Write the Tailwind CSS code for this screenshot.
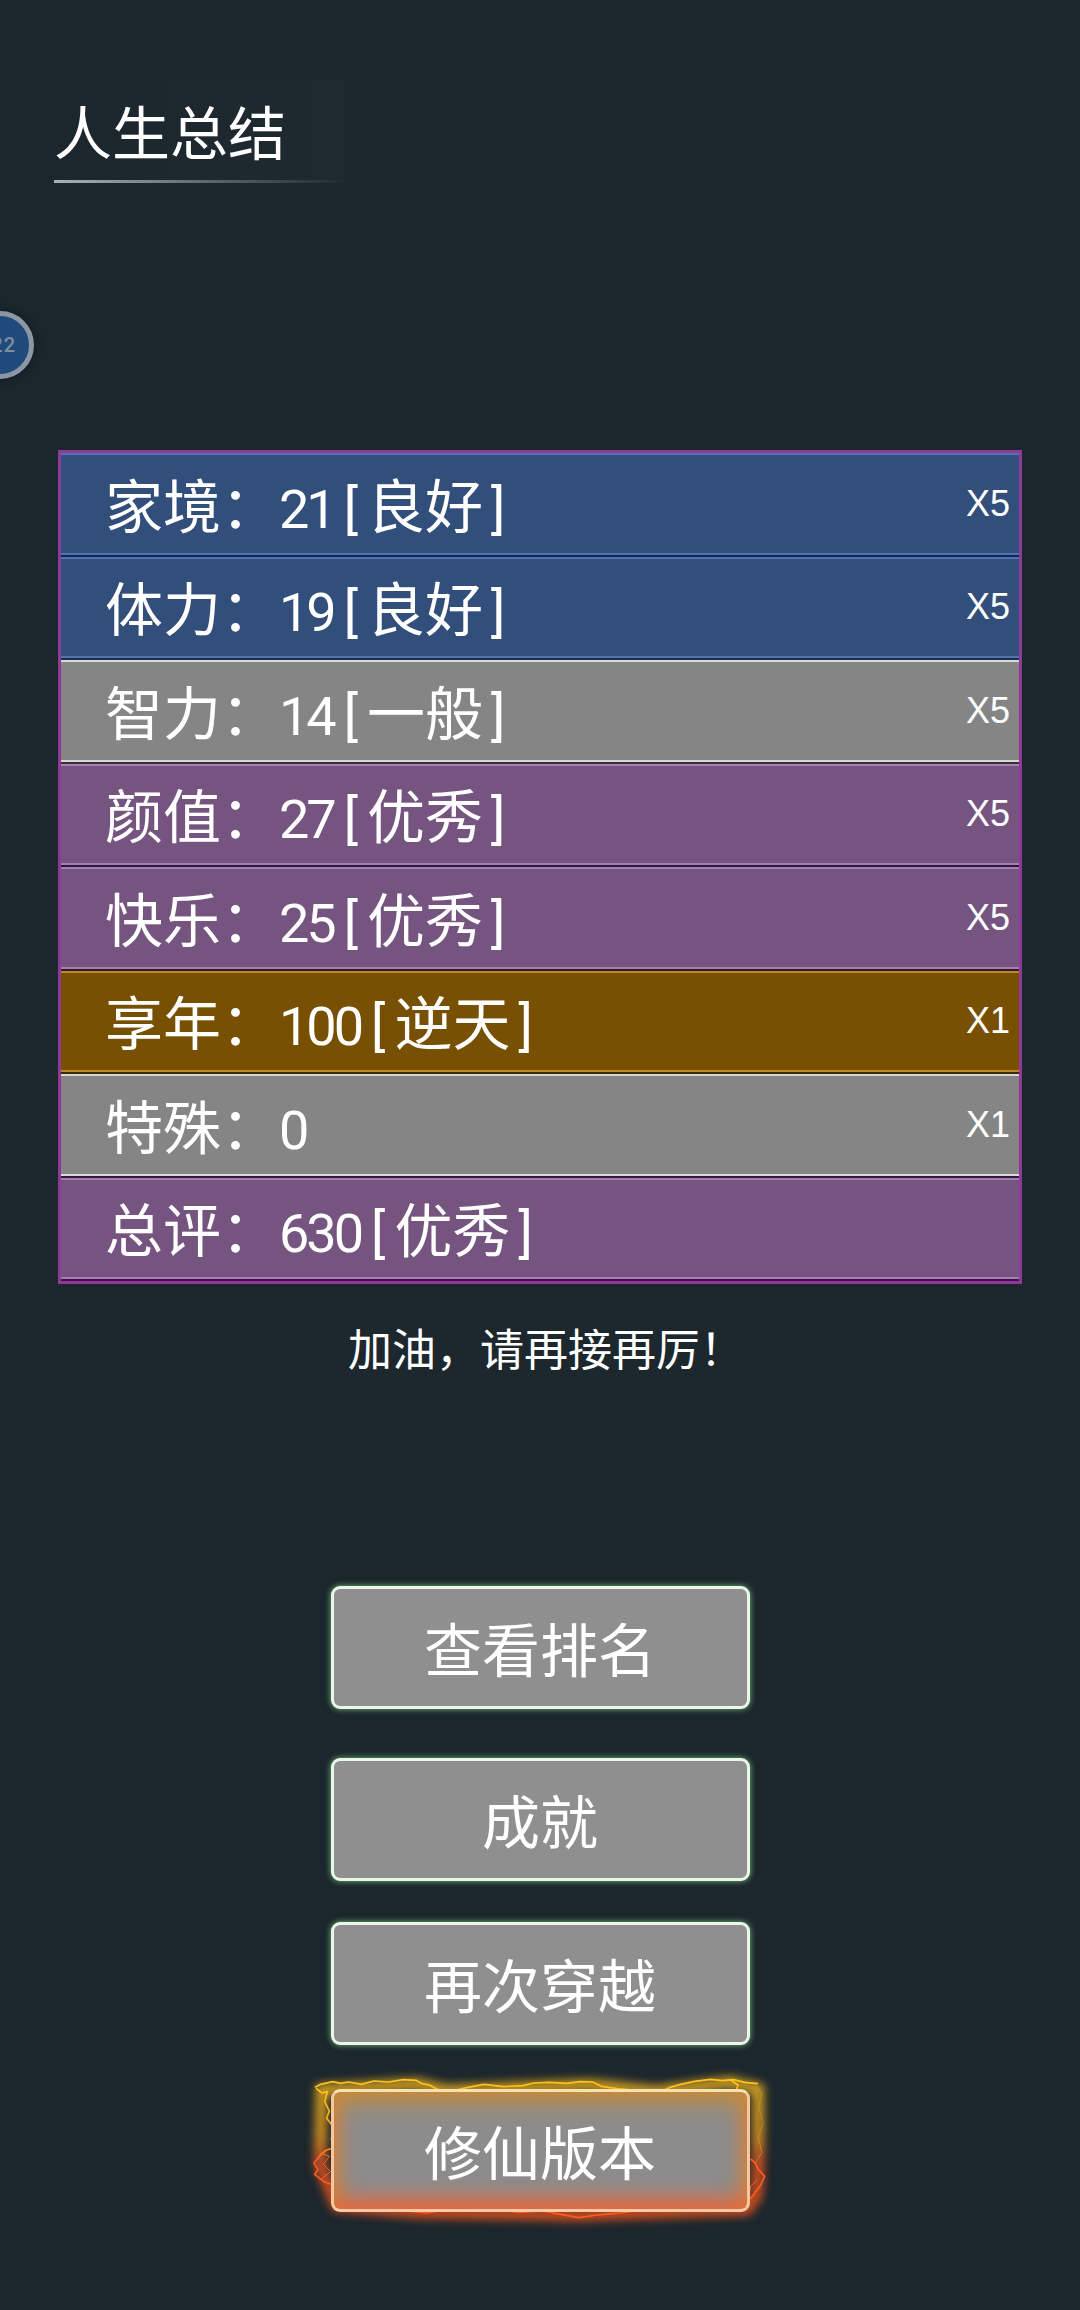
<!DOCTYPE html>
<html lang="zh">
<head>
  <meta charset="utf-8"/>
  <title>人生总结</title>
  <script src="https://cdn.jsdelivr.net/npm/@tailwindcss/browser@4"></script>
</head>
<body class="relative w-[1080px] h-[2310px] overflow-hidden bg-[#1c262d] text-white font-['Roboto','Noto_Sans_CJK_SC',sans-serif]">

  <!-- float ball -->
  <div class="absolute left-[-34px] top-[311px] w-[68px] h-[68px] rounded-full bg-[#1f4a7c] border-[5px] border-[#8b97a3] shadow-[0_0_8px_#11181d] flex items-center justify-end pr-[13px] text-[20px] font-medium leading-none tracking-[1px] text-[#7f8d9c]">22</div>

  <!-- title -->
  <div class="ml-[54px] pt-[80px]">
    <div class="w-[290px] h-[103px] flex items-center bg-gradient-to-r from-[#1c262d] to-[#1e2930] border-b-[3px] border-transparent relative">
      <h1 class="text-[58px] leading-none font-normal mt-[10px]">人生总结</h1>
      <div class="absolute left-0 right-0 bottom-[-3px] h-[3px] bg-gradient-to-r from-[#a8b0b8] to-transparent"></div>
    </div>
  </div>

  <!-- score table -->
  <div class="mt-[267px] ml-[58px] w-[964px] h-[834px] border-[3px] border-[#8f3a96] text-[58px]">
    <div class="h-[103.5px] border-b-2 border-[#0d2a50]">
      <div class="h-full bg-[#324e7b] border-y-2 border-[#5273b4] flex items-center justify-between pl-[44px] pr-[9px]">
        <span class="leading-none mt-[8px]">家境：<span class="text-[54px] tracking-[-3px]">21<span class="ml-[10px] mr-[12px]">[</span></span>良好<span class="text-[54px] ml-[8px]">]</span></span>
        <span class="text-[36px] font-['Liberation_Sans',sans-serif]">X5</span>
      </div>
    </div>
    <div class="h-[103.5px] border-b-2 border-[#1a2f4a]">
      <div class="h-full bg-[#324e7b] border-y-2 border-[#5273b4] flex items-center justify-between pl-[44px] pr-[9px]">
        <span class="leading-none mt-[8px]">体力：<span class="text-[54px] tracking-[-3px]">19<span class="ml-[10px] mr-[12px]">[</span></span>良好<span class="text-[54px] ml-[8px]">]</span></span>
        <span class="text-[36px] font-['Liberation_Sans',sans-serif]">X5</span>
      </div>
    </div>
    <div class="h-[103.5px] border-b-2 border-[#333333]">
      <div class="h-full bg-[#858585] border-y-2 border-[#d8d8d8] flex items-center justify-between pl-[44px] pr-[9px]">
        <span class="leading-none mt-[8px]">智力：<span class="text-[54px] tracking-[-3px]">14<span class="ml-[10px] mr-[12px]">[</span></span>一般<span class="text-[54px] ml-[8px]">]</span></span>
        <span class="text-[36px] font-['Liberation_Sans',sans-serif]">X5</span>
      </div>
    </div>
    <div class="h-[103.5px] border-b-2 border-[#2e1a3a]">
      <div class="h-full bg-[#75557f] border-y-2 border-[#a57fb0] flex items-center justify-between pl-[44px] pr-[9px]">
        <span class="leading-none mt-[8px]">颜值：<span class="text-[54px] tracking-[-3px]">27<span class="ml-[10px] mr-[12px]">[</span></span>优秀<span class="text-[54px] ml-[8px]">]</span></span>
        <span class="text-[36px] font-['Liberation_Sans',sans-serif]">X5</span>
      </div>
    </div>
    <div class="h-[103.5px] border-b-2 border-[#2e1a3a]">
      <div class="h-full bg-[#75557f] border-y-2 border-[#a57fb0] flex items-center justify-between pl-[44px] pr-[9px]">
        <span class="leading-none mt-[8px]">快乐：<span class="text-[54px] tracking-[-3px]">25<span class="ml-[10px] mr-[12px]">[</span></span>优秀<span class="text-[54px] ml-[8px]">]</span></span>
        <span class="text-[36px] font-['Liberation_Sans',sans-serif]">X5</span>
      </div>
    </div>
    <div class="h-[103.5px] border-b-2 border-[#3a2800]">
      <div class="h-full bg-[#775003] border-y-2 border-[#c08a20] flex items-center justify-between pl-[44px] pr-[9px]">
        <span class="leading-none mt-[8px]">享年：<span class="text-[54px] tracking-[-3px]">100<span class="ml-[10px] mr-[12px]">[</span></span>逆天<span class="text-[54px] ml-[8px]">]</span></span>
        <span class="text-[36px] font-['Liberation_Sans',sans-serif]">X1</span>
      </div>
    </div>
    <div class="h-[103.5px] border-b-2 border-[#2e1a3a]">
      <div class="h-full bg-[#858585] border-y-2 border-[#d8d8d8] flex items-center justify-between pl-[44px] pr-[9px]">
        <span class="leading-none mt-[8px]">特殊：<span class="text-[54px] tracking-[-3px]">0</span></span>
        <span class="text-[36px] font-['Liberation_Sans',sans-serif]">X1</span>
      </div>
    </div>
    <div class="h-[103.5px] border-b-2 border-[#45104f]">
      <div class="h-full bg-[#75557f] border-y-2 border-[#a57fb0] flex items-center pl-[44px] pr-[9px]">
        <span class="leading-none mt-[8px]">总评：<span class="text-[54px] tracking-[-3px]">630<span class="ml-[10px] mr-[12px]">[</span></span>优秀<span class="text-[54px] ml-[8px]">]</span></span>
      </div>
    </div>
  </div>

  <!-- message -->
  <div class="mt-[16px] mx-auto w-[870px] h-[84px] flex items-center justify-center bg-[#1d272e] pt-[18px] pl-[12px] text-[44px] leading-none">
    加油，请再接再厉！
  </div>

  <!-- buttons -->
  <div class="mt-[202px] flex flex-col items-center">
    <button class="w-[419px] h-[123px] pt-[8px] rounded-[9px] bg-[#8f8f8f] border-[3px] border-[#eaf6ea] shadow-[0_0_6px_#6fbf6f] text-[58px] leading-none">查看排名</button>
    <button class="mt-[49px] w-[419px] h-[123px] pt-[8px] rounded-[9px] bg-[#8f8f8f] border-[3px] border-[#eaf6ea] shadow-[0_0_6px_#6fbf6f] text-[58px] leading-none">成就</button>
    <button class="mt-[41px] w-[419px] h-[123px] pt-[8px] rounded-[9px] bg-[#8f8f8f] border-[3px] border-[#eaf6ea] shadow-[0_0_6px_#6fbf6f] text-[58px] leading-none">再次穿越</button>
    <div class="relative mt-[44px] w-[419px] h-[123px]">
      <!-- fire frame, coordinates are 3x of the svg box -->
      <svg class="absolute left-[-41px] top-[-40px] w-[500px] h-[200px]" viewBox="0 0 1500 600" fill="none">
        <defs>
          <linearGradient id="fire" x1="0" y1="90" x2="0" y2="510" gradientUnits="userSpaceOnUse">
            <stop offset="0" stop-color="#ffc21f"/>
            <stop offset="0.42" stop-color="#ffa81e"/>
            <stop offset="0.58" stop-color="#ff5c20"/>
            <stop offset="1" stop-color="#ff5a1e"/>
          </linearGradient>
          <filter id="glow" x="-10%" y="-30%" width="120%" height="160%"><feGaussianBlur stdDeviation="14"/></filter>
          <filter id="soft" x="-10%" y="-30%" width="120%" height="160%"><feGaussianBlur stdDeviation="1.2"/></filter>
        </defs>
        <path filter="url(#glow)" stroke="url(#fire)" stroke-width="34" opacity="0.8" d="M95 122 L380 105 L470 125 L900 108 L1100 128 L1320 100 L1405 120 L1405 350 L1400 440 L1370 482 L860 498 L380 490 L140 470 L90 350 Z"/>
        <g filter="url(#soft)" stroke="url(#fire)" stroke-linejoin="round" stroke-width="5">
          <path d="M75 115 L92 106 L128 98 L152 103 L176 99 L214 106 L252 96 L296 99 L340 92 L378 94 L396 104 L418 108 L440 120 L482 128 L530 116 L582 106 L640 113 L698 110 L732 102 L778 100 L830 103 L872 98 L908 99 L934 112 L982 119 L1040 125 L1104 131 L1138 116 L1172 106 L1214 97 L1262 91 L1296 95 L1330 92 L1364 100 L1404 104"/>
          <path d="M78 118 L96 132 L112 128 L104 158 L118 186 L110 208 L132 236 L124 270 L132 296 L108 304 L92 318 L72 342 L84 362 L74 376 L102 398 L130 408 L138 436 L152 462 L184 470 L232 478 L290 470 L352 486 L410 492 L468 482 L540 486 L610 480 L688 490 L760 486 L812 496 L866 506 L922 498 L990 492 L1060 482 L1130 486 L1192 476 L1262 482 L1342 480 L1372 458 L1392 436 L1412 408 L1424 382 L1404 360 L1396 342 L1382 330"/>
          <path d="M1322 93 L1344 108 L1336 134 L1356 160 L1350 186 L1368 212 L1362 246 L1378 270 L1368 296"/>
          <path d="M92 312 L118 322 L100 346 L122 368 L96 388" stroke-width="3"/>
          <path d="M150 440 L196 462 L262 468 L330 476 L372 482" stroke-width="3"/>
          <path d="M1330 470 L1376 444 L1382 412 L1402 392" stroke-width="3"/>
        </g>
        <path d="M1392 106 L1416 134 L1406 176 L1420 220 L1404 264 L1416 310 L1396 342" stroke="#c8a23a" stroke-width="3" opacity="0.55"/>
      </svg>
      <button class="relative w-full h-full pt-[8px] rounded-[9px] bg-[#8c8c8c] border-[3px] border-t-[#f6e2b0] border-x-[#f4c9a0] border-b-[#ffc9a8] shadow-[inset_0_18px_22px_-8px_#c68a38,inset_0_-18px_22px_-8px_#e9663a,inset_16px_0_20px_-10px_#c98a50,inset_-16px_0_20px_-10px_#c98a50] text-[58px] leading-none">修仙版本</button>
    </div>
  </div>
</body>
</html>
